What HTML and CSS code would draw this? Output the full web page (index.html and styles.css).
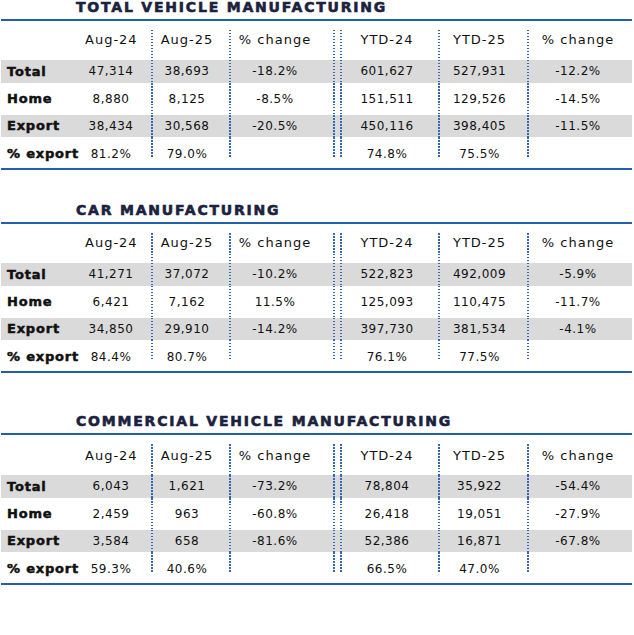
FILE: index.html
```html
<!DOCTYPE html>
<html lang="en">
<head>
<meta charset="utf-8">
<title>Vehicle manufacturing</title>
<link rel="stylesheet" href="styles.css">
</head>
<body>
<section class="block">
  <h2 class="title">TOTAL VEHICLE MANUFACTURING</h2>
  <div class="table">
    <div class="cell head lab"></div><div class="cell head c1">Aug-24</div><div class="cell head c2">Aug-25</div><div class="cell head c3">% change</div><div class="cell head c4">YTD-24</div><div class="cell head c5">YTD-25</div><div class="cell head c6">% change</div>
    <div class="cell band lab">Total</div><div class="cell band c1">47,314</div><div class="cell band c2">38,693</div><div class="cell band c3">-18.2%</div><div class="cell band c4">601,627</div><div class="cell band c5">527,931</div><div class="cell band c6">-12.2%</div>
    <div class="cell plain lab">Home</div><div class="cell plain c1">8,880</div><div class="cell plain c2">8,125</div><div class="cell plain c3">-8.5%</div><div class="cell plain c4">151,511</div><div class="cell plain c5">129,526</div><div class="cell plain c6">-14.5%</div>
    <div class="cell band2 lab">Export</div><div class="cell band2 c1">38,434</div><div class="cell band2 c2">30,568</div><div class="cell band2 c3">-20.5%</div><div class="cell band2 c4">450,116</div><div class="cell band2 c5">398,405</div><div class="cell band2 c6">-11.5%</div>
    <div class="cell last lab">% export</div><div class="cell last c1">81.2%</div><div class="cell last c2">79.0%</div><div class="cell last c3"></div><div class="cell last c4">74.8%</div><div class="cell last c5">75.5%</div><div class="cell last c6"></div>
  </div>
</section>

<section class="block block-2">
  <h2 class="title">CAR MANUFACTURING</h2>
  <div class="table">
    <div class="cell head lab"></div><div class="cell head c1">Aug-24</div><div class="cell head c2">Aug-25</div><div class="cell head c3">% change</div><div class="cell head c4">YTD-24</div><div class="cell head c5">YTD-25</div><div class="cell head c6">% change</div>
    <div class="cell band lab">Total</div><div class="cell band c1">41,271</div><div class="cell band c2">37,072</div><div class="cell band c3">-10.2%</div><div class="cell band c4">522,823</div><div class="cell band c5">492,009</div><div class="cell band c6">-5.9%</div>
    <div class="cell plain lab">Home</div><div class="cell plain c1">6,421</div><div class="cell plain c2">7,162</div><div class="cell plain c3">11.5%</div><div class="cell plain c4">125,093</div><div class="cell plain c5">110,475</div><div class="cell plain c6">-11.7%</div>
    <div class="cell band2 lab">Export</div><div class="cell band2 c1">34,850</div><div class="cell band2 c2">29,910</div><div class="cell band2 c3">-14.2%</div><div class="cell band2 c4">397,730</div><div class="cell band2 c5">381,534</div><div class="cell band2 c6">-4.1%</div>
    <div class="cell last lab">% export</div><div class="cell last c1">84.4%</div><div class="cell last c2">80.7%</div><div class="cell last c3"></div><div class="cell last c4">76.1%</div><div class="cell last c5">77.5%</div><div class="cell last c6"></div>
  </div>
</section>

<section class="block block-3">
  <h2 class="title">COMMERCIAL VEHICLE MANUFACTURING</h2>
  <div class="table table-3">
    <div class="cell head lab"></div><div class="cell head c1">Aug-24</div><div class="cell head c2">Aug-25</div><div class="cell head c3">% change</div><div class="cell head c4">YTD-24</div><div class="cell head c5">YTD-25</div><div class="cell head c6">% change</div>
    <div class="cell band lab">Total</div><div class="cell band c1">6,043</div><div class="cell band c2">1,621</div><div class="cell band c3">-73.2%</div><div class="cell band c4">78,804</div><div class="cell band c5">35,922</div><div class="cell band c6">-54.4%</div>
    <div class="cell plain lab">Home</div><div class="cell plain c1">2,459</div><div class="cell plain c2">963</div><div class="cell plain c3">-60.8%</div><div class="cell plain c4">26,418</div><div class="cell plain c5">19,051</div><div class="cell plain c6">-27.9%</div>
    <div class="cell band2 lab">Export</div><div class="cell band2 c1">3,584</div><div class="cell band2 c2">658</div><div class="cell band2 c3">-81.6%</div><div class="cell band2 c4">52,386</div><div class="cell band2 c5">16,871</div><div class="cell band2 c6">-67.8%</div>
    <div class="cell last lab">% export</div><div class="cell last c1">59.3%</div><div class="cell last c2">40.6%</div><div class="cell last c3"></div><div class="cell last c4">66.5%</div><div class="cell last c5">47.0%</div><div class="cell last c6"></div>
  </div>
</section>
</body>
</html>
```

FILE: styles.css
```css
html, body {
  margin: 0;
  padding: 0;
  background: #ffffff;
}

body {
  width: 634px;
  font-family: "DejaVu Sans", "Liberation Sans", sans-serif;
  color: #111111;
}

.block {
  margin: 0 0 0 1px;
  width: 631px;
}

.block-2 {
  margin-top: 33px;
}

.block-3 {
  margin-top: 41px;
}

.title {
  margin: 0 0 5px 75px;
  font-size: 14px;
  line-height: 14px;
  font-weight: 700;
  letter-spacing: 1.8px;
  color: #1b2240;
  -webkit-text-stroke: 0.6px #1b2240;
  white-space: nowrap;
}

.table {
  display: grid;
  grid-template-columns: 84px 66px 78px 104px 105px 89px 105px;
  border-top: 2px solid #2160a8;
  border-bottom: 2px solid #2160a8;
}

.cell {
  text-align: center;
  font-size: 12px;
  letter-spacing: 0.5px;
  white-space: nowrap;
  --dot: repeating-linear-gradient(to bottom, #3468b4 0 1.5px, transparent 1.5px 3px);
  background-repeat: no-repeat;
}

.head {
  padding: 9px 0 10px;
  line-height: 20px;
  font-size: 13px;
  letter-spacing: 1px;
}

.table-3 .head {
  padding-top: 11px;
  padding-bottom: 9px;
}

.band, .band2 {
  background-color: #dadada;
}

.band {
  height: 23px;
  line-height: 23px;
}

.plain {
  height: 32px;
  line-height: 32px;
}

.band2 {
  height: 22px;
  line-height: 22px;
}

.last {
  padding: 7px 0 4px;
  line-height: 20px;
}

.lab {
  text-align: left;
  padding-left: 6px;
  font-weight: 700;
  font-size: 13px;
  letter-spacing: 0.8px;
  -webkit-text-stroke: 0.5px #111111;
}

.c1 { padding-right: 14px; }
.c2 { padding-right: 6px; }
.c3 { padding-right: 12px; }
.c4 { padding-left: 7px; padding-right: 4px; }
.c5 { padding-right: 6px; }
.c6 { padding-right: 3px; }

.c2, .c3, .c5, .c6 {
  background-image: var(--dot);
  background-position: 0 0;
  background-size: 2px 100%;
}

.c4 {
  background-image: var(--dot), var(--dot);
  background-position: 0 0, 7px 0;
  background-size: 2px 100%, 2px 100%;
}

.head.c2, .head.c3, .head.c5, .head.c6 {
  background-position: 0 9px;
  background-size: 2px calc(100% - 9px);
}

.head.c4 {
  background-position: 0 9px, 7px 9px;
  background-size: 2px calc(100% - 9px), 2px calc(100% - 9px);
}

.last.c2, .last.c3, .last.c5, .last.c6 {
  background-size: 2px 21px;
}

.last.c4 {
  background-size: 2px 21px, 2px 21px;
}
```
